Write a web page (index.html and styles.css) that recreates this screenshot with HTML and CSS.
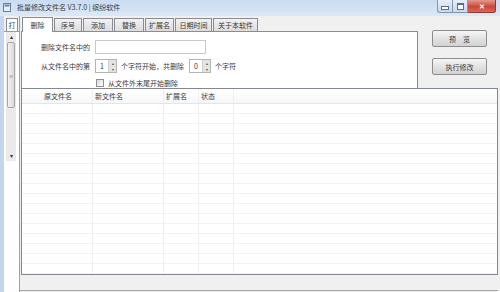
FILE: index.html
```html
<!DOCTYPE html>
<html lang="zh-CN">
<head>
    <meta charset="UTF-8">
    <title>批量修改文件名 V3.7.0 | 缤纷软件</title>
    <link rel="stylesheet" href="styles.css">
</head>
<body>
    <div class="window">
        <div class="titlebar">
            <svg class="app-icon" width="8" height="9" viewBox="0 0 8 9">
                <rect x="0.5" y="0.5" width="7" height="8" fill="#e8eef6" stroke="#6b7f99"/>
                <rect x="1.5" y="1.5" width="5" height="2" fill="#5f86b8"/>
            </svg>
            <span class="title">批量修改文件名 V3.7.0 | 缤纷软件</span>
            <div class="controls">
                <div class="ctl ctl-min"><span></span></div>
                <div class="ctl ctl-max"><span></span></div>
                <div class="ctl ctl-close">✕</div>
            </div>
        </div>
        <div class="frame">
            <div class="side">
                <div class="side-tab">打</div>
                <div class="side-panel">
                    <div class="vscroll">
                        <div class="arrow">▴</div>
                        <div class="thumb"><span>≡</span></div>
                        <div class="track"></div>
                        <div class="arrow">▾</div>
                    </div>
                </div>
            </div>
            <div class="main">
                <div class="top">
                    <div class="tabs">
                        <div class="tab-strip">
                            <div class="tab active t-del">删除</div>
                            <div class="tab t-seq">序号</div>
                            <div class="tab t-add">添加</div>
                            <div class="tab t-rep">替换</div>
                            <div class="tab t-ext">扩展名</div>
                            <div class="tab t-date">日期时间</div>
                            <div class="tab t-about">关于本软件</div>
                        </div>
                        <div class="tab-page">
                            <div class="row row-name">
                                <span class="lbl">删除文件名中的</span>
                                <div class="textbox"></div>
                            </div>
                            <div class="row row-range">
                                <span class="lbl">从文件名中的第</span>
                                <div class="spin"><span class="val">1</span><span class="btns">▴<br>▾</span></div>
                                <span class="lbl">个字符开始，共删除</span>
                                <div class="spin"><span class="val">0</span><span class="btns">▴<br>▾</span></div>
                                <span class="lbl">个字符</span>
                            </div>
                            <div class="row row-check">
                                <span class="check"></span>
                                <span class="lbl">从文件外末尾开始删除</span>
                            </div>
                        </div>
                    </div>
                    <div class="actions">
                        <button class="btn">预　览</button>
                        <button class="btn">执行修改</button>
                    </div>
                </div>
                <div class="list">
                    <div class="list-head">
                        <div class="c c1 center">原文件名</div>
                        <div class="c c2">新文件名</div>
                        <div class="c c3">扩展名</div>
                        <div class="c c4">状态</div>
                        <div class="c c5"></div>
                    </div>
                    <div class="list-body">
                        <div class="r"><div class="c c1"></div><div class="c c2"></div><div class="c c3"></div><div class="c c4"></div><div class="c c5"></div></div>
                        <div class="r"><div class="c c1"></div><div class="c c2"></div><div class="c c3"></div><div class="c c4"></div><div class="c c5"></div></div>
                        <div class="r"><div class="c c1"></div><div class="c c2"></div><div class="c c3"></div><div class="c c4"></div><div class="c c5"></div></div>
                        <div class="r"><div class="c c1"></div><div class="c c2"></div><div class="c c3"></div><div class="c c4"></div><div class="c c5"></div></div>
                        <div class="r"><div class="c c1"></div><div class="c c2"></div><div class="c c3"></div><div class="c c4"></div><div class="c c5"></div></div>
                        <div class="r"><div class="c c1"></div><div class="c c2"></div><div class="c c3"></div><div class="c c4"></div><div class="c c5"></div></div>
                        <div class="r"><div class="c c1"></div><div class="c c2"></div><div class="c c3"></div><div class="c c4"></div><div class="c c5"></div></div>
                        <div class="r"><div class="c c1"></div><div class="c c2"></div><div class="c c3"></div><div class="c c4"></div><div class="c c5"></div></div>
                        <div class="r"><div class="c c1"></div><div class="c c2"></div><div class="c c3"></div><div class="c c4"></div><div class="c c5"></div></div>
                        <div class="r"><div class="c c1"></div><div class="c c2"></div><div class="c c3"></div><div class="c c4"></div><div class="c c5"></div></div>
                        <div class="r"><div class="c c1"></div><div class="c c2"></div><div class="c c3"></div><div class="c c4"></div><div class="c c5"></div></div>
                        <div class="r"><div class="c c1"></div><div class="c c2"></div><div class="c c3"></div><div class="c c4"></div><div class="c c5"></div></div>
                        <div class="r"><div class="c c1"></div><div class="c c2"></div><div class="c c3"></div><div class="c c4"></div><div class="c c5"></div></div>
                        <div class="r"><div class="c c1"></div><div class="c c2"></div><div class="c c3"></div><div class="c c4"></div><div class="c c5"></div></div>
                        <div class="r"><div class="c c1"></div><div class="c c2"></div><div class="c c3"></div><div class="c c4"></div><div class="c c5"></div></div>
                        <div class="r"><div class="c c1"></div><div class="c c2"></div><div class="c c3"></div><div class="c c4"></div><div class="c c5"></div></div>
                        <div class="r"><div class="c c1"></div><div class="c c2"></div><div class="c c3"></div><div class="c c4"></div><div class="c c5"></div></div>
                    </div>
                </div>
                <div class="status"></div>
            </div>
        </div>
    </div>
</body>
</html>
```

FILE: styles.css
```css
body {
    margin: 0;
    width: 500px;
    height: 292px;
    overflow: hidden;
    font-family: "Noto Sans CJK SC", "Liberation Sans", sans-serif;
    font-size: 7px;
    color: #3a3a3a;
}
.window {
    display: flex;
    flex-direction: column;
    height: 292px;
    background: #f0f0f0;
}
.titlebar {
    height: 16px;
    display: flex;
    align-items: flex-start;
    background: linear-gradient(to bottom, #c9dcf1, #dbe8f6);
}
.app-icon {
    margin: 3px 0 0 3px;
}
.title {
    margin-left: 6px;
    line-height: 15px;
    color: #3a3a3a;
}
.controls {
    margin-left: auto;
    margin-right: 4px;
    display: flex;
}
.ctl {
    height: 12px;
    border: 1px solid #8396b2;
    border-top: none;
    display: flex;
    align-items: center;
    justify-content: center;
}
.ctl-min, .ctl-max {
    width: 14px;
    background: linear-gradient(to bottom, #e7eef8, #c9d8ec);
}
.ctl-min {
    border-radius: 0 0 0 3px;
    border-right: none;
}
.ctl-min span {
    width: 6px;
    height: 2px;
    margin-top: 4px;
    background: #fff;
    border: 1px solid #5b6d86;
}
.ctl-max span {
    width: 5px;
    height: 4px;
    border: 1px solid #5b6d86;
    border-top-width: 2px;
    background: #fff;
}
.ctl-close {
    width: 27px;
    border-left: none;
    border-color: #8d3a32;
    border-radius: 0 0 3px 0;
    background: linear-gradient(to bottom, #e59a8c, #c9473a 55%, #d86a55);
    color: #fff;
    font-size: 7px;
    font-weight: bold;
}
.frame {
    flex: 1;
    display: flex;
    border-left: 4px solid #c3d6ed;
    padding-right: 2px;
}
.side {
    width: 15px;
    display: flex;
    flex-direction: column;
    border-right: 1px solid #a0a0a0;
}
.side-tab {
    margin: 2px 0 0 2px;
    width: 10px;
    height: 12px;
    border: 1px solid #8c8c8c;
    border-bottom: none;
    background: #fff;
    line-height: 12px;
    text-align: center;
}
.side-panel {
    flex: 1;
    background: #fff;
    border-top: 1px solid #9a9a9a;
    padding-left: 2px;
}
.vscroll {
    width: 10px;
    height: 129px;
    display: flex;
    flex-direction: column;
    background: #eaeaea;
}
.arrow {
    height: 10px;
    line-height: 10px;
    text-align: center;
    font-size: 6px;
    color: #333;
}
.thumb {
    height: 64px;
    margin: 0 1px;
    border: 1px solid #a6a6a6;
    border-radius: 2px;
    background: linear-gradient(to right, #f3f3f3, #d9d9d9);
    display: flex;
    align-items: center;
    justify-content: center;
    font-size: 5px;
    color: #666;
}
.track {
    flex: 1;
}
.main {
    flex: 1;
    display: flex;
    flex-direction: column;
    padding-bottom: 1px;
}
.top {
    height: 72px;
    display: flex;
}
.tabs {
    width: 397px;
    margin-left: 1px;
    display: flex;
    flex-direction: column;
}
.tab-strip {
    height: 15px;
    display: flex;
    align-items: flex-end;
    padding-left: 1px;
}
.tab {
    height: 12px;
    margin-right: 1px;
    border: 1px solid #898c95;
    border-bottom: none;
    background: linear-gradient(to bottom, #f2f2f2, #dcdcdc);
    line-height: 12px;
    text-align: center;
    box-sizing: border-box;
    height: 13px;
}
.tab.active {
    height: 15px;
    margin-bottom: -1px;
    background: #fff;
    position: relative;
    line-height: 14px;
}
.t-del { width: 31px; }
.t-seq { width: 28px; }
.t-add { width: 30px; }
.t-rep { width: 30px; }
.t-ext { width: 29px; }
.t-date { width: 37px; }
.t-about { width: 45px; }
.tab-page {
    flex: 1;
    background: #fff;
    border: 1px solid #898c95;
    border-bottom: none;
    padding: 8px 0 0 19px;
}
.row {
    display: flex;
    align-items: center;
}
.row-name {
    height: 14px;
}
.row-range {
    margin-top: 5px;
    height: 14px;
}
.row-check {
    margin-top: 5px;
    padding-left: 55px;
}
.lbl {
    white-space: nowrap;
}
.textbox {
    width: 109px;
    height: 12px;
    margin-left: 5px;
    border: 1px solid #c8c8c8;
    background: #fff;
}
.spin {
    width: 20px;
    height: 12px;
    margin: 0 4px 0 5px;
    border: 1px solid #b5b5b5;
    display: flex;
    justify-content: space-between;
}
.val {
    padding-left: 4px;
    line-height: 12px;
}
.btns {
    width: 7px;
    background: #e4e4e4;
    border-left: 1px solid #cfcfcf;
    font-size: 4px;
    line-height: 6px;
    text-align: center;
    color: #555;
}
.check {
    width: 6px;
    height: 6px;
    margin-right: 4px;
    border: 1px solid #8e8f8f;
    background: linear-gradient(to bottom right, #dcdcdc, #fbfbfb);
}
.actions {
    flex: 1;
    display: flex;
    flex-direction: column;
    align-items: flex-start;
    padding: 14px 0 0 14px;
    gap: 11px;
}
.btn {
    width: 55px;
    height: 17px;
    margin: 0;
    padding: 0;
    border: 1px solid #8d8d8d;
    border-radius: 2px;
    background: linear-gradient(to bottom, #f6f6f6, #e2e2e2 50%, #d2d2d2);
    font-family: inherit;
    font-size: 7px;
    color: #3a3a3a;
}
.list {
    flex: 1;
    margin-left: 1px;
    border: 1px solid #828790;
    background: #fff;
    display: flex;
    flex-direction: column;
}
.list-head {
    height: 14px;
    display: flex;
    border-bottom: 1px solid #e5e5e5;
    background: linear-gradient(to bottom, #fff, #f6f7f9);
    line-height: 14px;
}
.r {
    height: 9px;
    display: flex;
    border-bottom: 1px solid #f2f2f2;
}
.c {
    border-right: 1px solid #efefef;
    padding-left: 2px;
    box-sizing: border-box;
}
.c.center {
    text-align: center;
}
.c1 { width: 71px; }
.c2 { width: 71px; }
.c3 { width: 35px; }
.c4 { width: 35px; }
.c5 { flex: 1; border-right: none; }
.list-body {
    flex: 1;
}
.status {
    height: 15px;
    border-bottom: 1px solid #a6a6a6;
    background: #f0f0f0;
}
```
